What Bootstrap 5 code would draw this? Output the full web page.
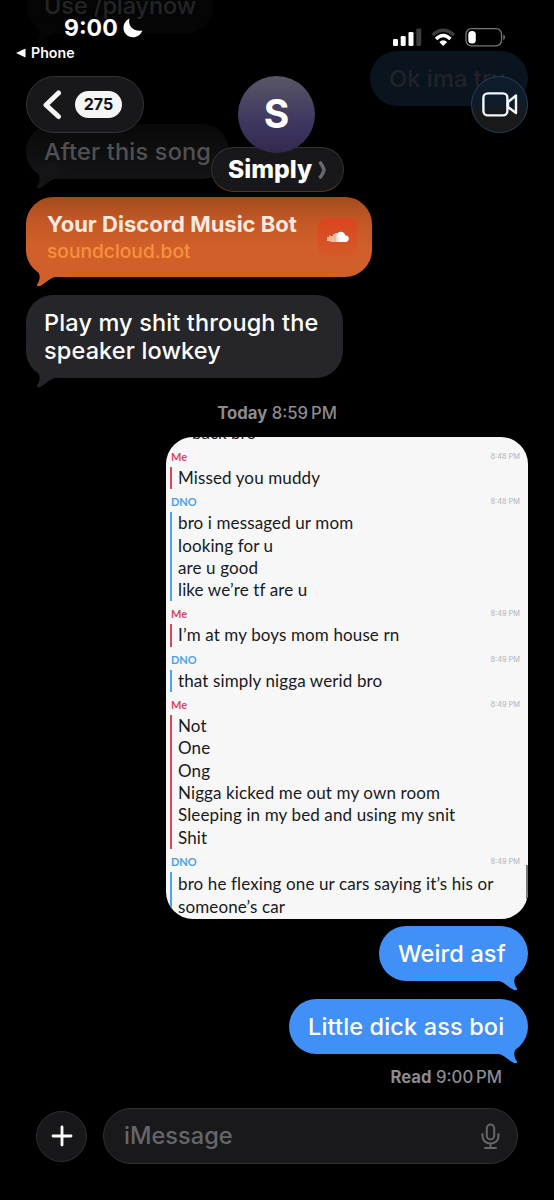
<!DOCTYPE html>
<html lang="en">
<head>
<meta charset="utf-8">
<meta name="viewport" content="width=device-width, initial-scale=1">
<title>Messages</title>
<link href="https://cdn.jsdelivr.net/npm/bootstrap@5.3.0/dist/css/bootstrap.min.css" rel="stylesheet">
<style>
html,body{height:1200px;overflow:hidden}
body{background:#000;color:#fff;font-family:Inter,"Liberation Sans",sans-serif}
.phone{width:554px;height:1200px}
.thread{padding:0 26px}
.bubble{position:relative;width:max-content;height:55px;border-radius:27.5px;padding:0 0 0 18px;font-size:23.5px;font-weight:500;line-height:28px;letter-spacing:.14px;white-space:nowrap;display:flex;align-items:center;background:#26252a;color:#fff}
.bubble .tail{position:absolute;left:0;bottom:-11px;width:40px;height:32px;fill:#26252a}
.sent{margin-left:auto;background:#4190f8;padding:0 0 0 19px}
.sent .tail{left:auto;right:0;transform:scaleX(-1);fill:#4190f8}
.b-use{width:188px;margin-top:-22px;background:#050506;color:#242426;letter-spacing:-.08px}
.b-use .tail{fill:#050506}
.b-try{width:158px;margin-top:18px;background:#09141f;color:#222327}
.b-song{width:203px;margin-top:18px;background:linear-gradient(#09090a,#141416);color:#515153;letter-spacing:.2px}
.b-song .tail{fill:#141416}
.b-link{width:346px;height:80px;margin-top:18px;border-radius:27px;padding:0 15px 0 21px;letter-spacing:0;background:linear-gradient(#a24b1d,#c25725 28%,#d05f29 60%)}
.b-link .tail{fill:#d05f29}
.link-title{font-size:22px;font-weight:700;line-height:28px;color:#fbe9e0}
.link-host{font-size:19.2px;line-height:27px;color:#f7913b}
.sc-icon{width:39px;height:39px;border-radius:8px;background:linear-gradient(#d94420,#d65a2a)}
.b-play{width:317px;height:83px;margin-top:18px;border-radius:27px}
.stamp{font-size:16.7px;font-weight:500;line-height:20px;color:#8b8b91;white-space:nowrap}
.stamp b{font-weight:700}
.today{margin-top:25px}
.read{margin-top:13px;padding-right:26px}
.shot{width:362px;height:482px;margin:14px 0 0 auto;border-radius:27px;background:#f7f7f8;overflow:hidden;position:relative;font-family:Lato,"Noto Sans",sans-serif;color:#17191c;padding-left:4px}
.peek{display:flow-root;height:7px;font-size:17px;line-height:22.3px;padding-left:22px}
.peek span{display:block;margin-top:-15.3px;white-space:nowrap}
.who{height:23px;padding:2px 8px 0 1px;font-size:11px;font-weight:700;line-height:22px;color:#e0435c}
.who time{font-family:Inter,sans-serif;font-size:7.4px;font-weight:400;color:#b0b3b8}
.lines{border-left:2px solid #e0435c;padding-left:6px;font-size:17px;line-height:22.3px;letter-spacing:.12px;white-space:nowrap}
.dno .who{color:#4aa3ee}.dno .lines{border-color:#4aa3ee}
.dno .who time{color:#b0b3b8}
.last{line-height:23.3px}
.scroller{position:absolute;right:0;top:428px;width:2px;height:34px;background:#777}
.composer{position:absolute;left:36px;right:36px;bottom:36px}
.plus{width:51px;height:51px;border-radius:50%;background:#18181a;border:1px solid #2e2e30}
.field{height:56px;border-radius:28px;background:#19191b;border:1px solid #303032;font-size:23.6px;font-weight:500;color:#66666a;padding:0 17px 0 20px}
.topbar{position:absolute;inset:0 0 auto 0;height:200px}
.glass{background:#18181a;border:1px solid #333335}
.clock{position:absolute;left:64px;top:14px;font-size:23px;font-weight:700;line-height:28px}
.back-app{position:absolute;left:16px;top:44px;font-size:14.200px;font-weight:600;line-height:18px}
.radios{position:absolute;left:393px;top:27px}
.back{position:absolute;left:26px;top:76px;width:118px;height:57px;border-radius:29px;padding-left:15px}
.count{width:47px;height:27px;border-radius:14px;background:#f5f5f5;color:#111;font-size:16px;font-weight:700;line-height:27px;text-align:center}
.face{position:absolute;left:238px;top:76px;width:77px;height:77px;border-radius:50%;background:linear-gradient(#595666,#3e3760 60%,#32294f);font-size:39px;font-weight:700}
.contact{position:absolute;left:211px;top:147px;width:133px;height:45px;border-radius:23px;border-bottom-color:#5c3519;font-size:24.600px;font-weight:800;padding-left:16px}
.video{position:absolute;left:471px;top:76px;width:57px;height:57px;border-radius:50%;background:linear-gradient(#0d1c2d,#101b28 50%,#19191a 65%);border-color:#24405e}
</style>
</head>
<body>
<svg class="d-none"><symbol id="tail" viewBox="0 0 40 32"><path d="M5 8C12 14 14.500 18 13.500 23Q13 26 11 28.500Q10.500 31 14 30C20 27 24 22 29 21L40 20L30 4Z"/></symbol></svg>
<main class="phone position-relative overflow-hidden">
  <div class="thread d-flex flex-column">
    <div class="bubble b-use"><span>Use /playnow</span><svg class="tail"><use href="#tail"/></svg></div>
    <div class="bubble sent b-try"><span>Ok ima try</span></div>
    <div class="bubble b-song"><span>After this song</span><svg class="tail"><use href="#tail"/></svg></div>
    <div class="bubble b-link justify-content-between">
      <div><div class="link-title">Your Discord Music Bot</div><div class="link-host">soundcloud.bot</div></div>
      <div class="sc-icon d-flex align-items-center justify-content-center"><svg width="22" height="12" viewBox="0 0 22 12"><path d="M11 11V1.500C15 -.5 18 2 18.300 4.500C20.500 4 22 6 21.800 8C21.500 10 20 11 18.500 11Z" fill="#fff"/><path d="M1 6v4M3 4.500v6M5 5v6M7 3v8M9 2v9M10.500 2v9" stroke="#ffd9c8" stroke-width="1.500"/></svg></div>
      <svg class="tail"><use href="#tail"/></svg>
    </div>
    <div class="bubble b-play"><span>Play my shit through the<br>speaker lowkey</span><svg class="tail"><use href="#tail"/></svg></div>
    <div class="stamp today text-center"><b>Today</b> 8:59&#8201;PM</div>
    <section class="shot">
      <div class="peek"><span>back bro</span></div>
      <div class="me"><div class="who d-flex justify-content-between"><span>Me</span><time>8:48 PM</time></div><div class="lines">Missed you muddy</div></div>
      <div class="dno"><div class="who d-flex justify-content-between"><span>DNO</span><time>8:48 PM</time></div><div class="lines">bro i messaged ur mom<br>looking for u<br>are u good<br>like we’re tf are u</div></div>
      <div class="me"><div class="who d-flex justify-content-between"><span>Me</span><time>8:49 PM</time></div><div class="lines">I’m at my boys mom house rn</div></div>
      <div class="dno"><div class="who d-flex justify-content-between"><span>DNO</span><time>8:49 PM</time></div><div class="lines">that simply nigga werid bro</div></div>
      <div class="me"><div class="who d-flex justify-content-between"><span>Me</span><time>8:49 PM</time></div><div class="lines">Not<br>One<br>Ong<br>Nigga kicked me out my own room<br>Sleeping in my bed and using my snit<br>Shit</div></div>
      <div class="dno"><div class="who d-flex justify-content-between"><span>DNO</span><time>8:49 PM</time></div><div class="lines last">bro he flexing one ur cars saying it’s his or<br>someone’s car</div></div>
      <div class="scroller"></div>
    </section>
    <div class="bubble sent" style="width:149px;margin-top:7px"><span>Weird asf</span><svg class="tail"><use href="#tail"/></svg></div>
    <div class="bubble sent" style="width:239px;margin-top:18px"><span>Little dick ass boi</span><svg class="tail"><use href="#tail"/></svg></div>
    <div class="stamp read text-end"><b>Read</b> 9:00&#8201;PM</div>
  </div>

  <header class="topbar">
    <div class="clock d-flex align-items-center"><span>9:00</span><svg width="20" height="20" viewBox="0 0 20 20" style="margin-left:5px"><path d="M6.500 .5C4.500 7.500 10 14 19.500 12.500C17.500 17 14 19.300 10 19.300C4.700 19.300 .5 15.200 .5 10C.5 5.500 3 2 6.500 .5Z" fill="#fff"/></svg></div>
    <div class="back-app d-flex align-items-center"><svg width="10" height="10" viewBox="0 0 10 10" style="margin-right:5px"><path d="M0 5L9.500 .5V9.500Z" fill="#fff"/></svg><span>Phone</span></div>
    <svg class="radios" width="114" height="22" viewBox="0 0 114 22">
      <g fill="#fff"><rect y="12" width="5" height="7" rx="1.300"/><rect x="7.700" y="9" width="5" height="10" rx="1.300"/><rect x="15.500" y="5" width="5" height="14" rx="1.300"/><rect x="23.300" y="1.500" width="5" height="17.500" rx="1.300" fill="#3c3c3e"/></g>
      <g fill="none" stroke-width="3.400"><path d="M39.500 8Q50.200 -1.500 61 8" stroke="#3c3c3e"/><path d="M43 12Q50.200 5 57.500 12" stroke="#fff"/></g><path d="M46.300 15Q50.200 11.500 54.200 15L50.200 19Z" fill="#fff"/>
      <rect x="73" y="1.600" width="35.500" height="17.200" rx="5.500" fill="none" stroke="#77777a" stroke-width="1.300"/><rect x="75.300" y="4" width="7.500" height="12.500" rx="3.500" fill="#fff"/><path d="M110.300 7.500Q112 8 112 10.200T110.300 13Z" fill="#77777a"/>
    </svg>
    <div class="back glass d-flex align-items-center"><svg width="20" height="32" viewBox="0 0 20 32" style="margin-right:13px"><path d="M16.500 4L4 16L16.500 27.500" fill="none" stroke="#f5f5f5" stroke-width="5" stroke-linecap="round" stroke-linejoin="round"/></svg><div class="count">275</div></div>
    <div class="contact glass d-flex align-items-center"><span>Simply</span><svg width="9" height="20" viewBox="0 0 9 20" style="margin-left:6px"><path d="M2.500 3Q5.500 7 6 10Q5.500 13 2.500 17" fill="none" stroke="#69696b" stroke-width="3.600" stroke-linecap="round"/></svg></div>
    <div class="face d-flex align-items-center justify-content-center">S</div>
    <div class="video glass d-flex align-items-center justify-content-center"><svg width="36" height="25" viewBox="0 0 36 25"><g fill="none" stroke="#f0f7fd" stroke-width="2.400" stroke-linejoin="round"><rect x="1.400" y="1.400" width="24" height="22" rx="4.500"/><path d="M26 10L34 3.500V21L26 15Z"/></g></svg></div>
  </header>

  <footer class="composer d-flex align-items-center" style="gap:16px">
    <div class="plus d-flex align-items-center justify-content-center flex-shrink-0"><svg width="22" height="22" viewBox="0 0 22 22"><path d="M11 2V20M2 11H20" stroke="#fff" stroke-width="2.800" stroke-linecap="round"/></svg></div>
    <div class="field d-flex align-items-center justify-content-between flex-fill"><span>iMessage</span><svg width="19" height="27" viewBox="0 0 19 27"><g fill="none" stroke="#66666a" stroke-width="2" stroke-linecap="round"><rect x="5.800" y="1.500" width="7.400" height="15" rx="3.700"/><path d="M1.500 11V13C1.500 23 17.500 23 17.500 13V11M9.500 20.500V25M4 25H15"/></g></svg></div>
  </footer>
</main>
<script src="https://cdn.jsdelivr.net/npm/bootstrap@5.3.0/dist/js/bootstrap.bundle.min.js"></script>
</body>
</html>
